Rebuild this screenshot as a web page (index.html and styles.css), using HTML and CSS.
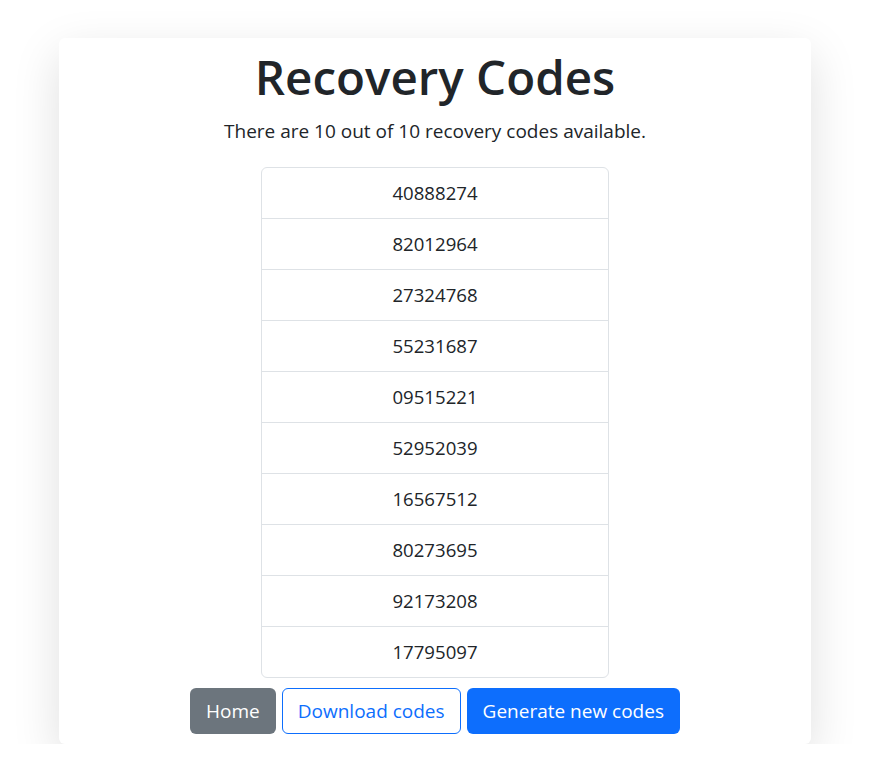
FILE: index.html
```html
<!DOCTYPE html>
<html lang="en">
<head>
    <meta charset="UTF-8">
    <meta name="viewport" content="width=device-width, initial-scale=1.0">
    <title>Recovery Codes</title>
    <link rel="stylesheet" href="styles.css">
</head>
<body>
    <div class="card">
        <h1>Recovery Codes</h1>
        <p class="lead">There are 10 out of 10 recovery codes available.</p>

        <ul class="code-list">
            <li>40888274</li>
            <li>82012964</li>
            <li>27324768</li>
            <li>55231687</li>
            <li>09515221</li>
            <li>52952039</li>
            <li>16567512</li>
            <li>80273695</li>
            <li>92173208</li>
            <li>17795097</li>
        </ul>

        <div class="actions">
            <a class="btn btn-secondary" href="#">Home</a>
            <a class="btn btn-outline" href="#">Download codes</a>
            <a class="btn btn-primary" href="#">Generate new codes</a>
        </div>
    </div>
</body>
</html>
```

FILE: styles.css
```css
body {
    margin: 0;
    background-color: #fff;
    color: #212529;
    font-family: "Open Sans", "Noto Sans", sans-serif;
}
.card {
    width: 752px;
    margin: 38px 0 0 59px;
    padding: 10px 0;
    box-sizing: border-box;
    background-color: #fff;
    border-radius: 6px;
    box-shadow: 0 16px 48px rgba(0, 0, 0, 0.13);
    display: flex;
    flex-direction: column;
    align-items: center;
}
h1 {
    margin: 0;
    font-size: 47.5px;
    font-weight: 600;
    line-height: 1.2;
}
.lead {
    margin: 12px 0 21px;
    font-size: 19px;
    line-height: 1.5;
}
.code-list {
    list-style: none;
    margin: 0 0 10px;
    padding: 0;
    width: 346px;
    border: 1px solid #dee2e6;
    border-radius: 6px;
}
.code-list li {
    padding: 10px 16px;
    font-size: 18.6px;
    line-height: 30px;
    text-align: center;
    border-top: 1px solid #dee2e6;
}
.code-list li:first-child {
    border-top: none;
}
.actions {
    display: flex;
    gap: 6px;
}
.btn {
    display: inline-block;
    padding: 7px 15px;
    font-size: 19px;
    line-height: 30px;
    border: 1px solid transparent;
    border-radius: 6px;
    text-decoration: none;
}
.btn-secondary {
    background-color: #6c757d;
    color: #fff;
}
.btn-outline {
    border-color: #0d6efd;
    color: #0d6efd;
}
.btn-primary {
    background-color: #0d6efd;
    color: #fff;
}
```
